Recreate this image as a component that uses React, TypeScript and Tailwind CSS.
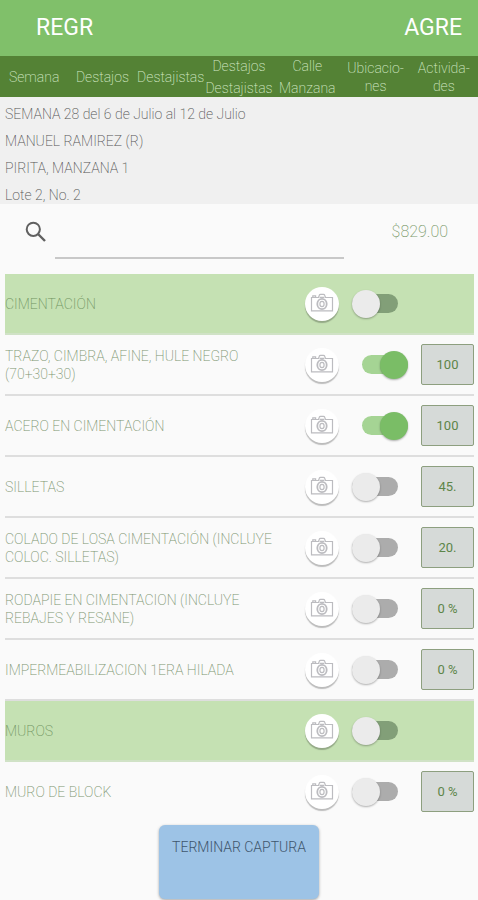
import { useState } from "react";

type Item = {
  name: string;
  group?: boolean;
  on?: boolean;
  value?: string;
};

const items: Item[] = [
  { name: "CIMENTACIÓN", group: true },
  { name: "TRAZO, CIMBRA, AFINE, HULE NEGRO (70+30+30)", on: true, value: "100" },
  { name: "ACERO EN CIMENTACIÓN", on: true, value: "100" },
  { name: "SILLETAS", value: "45." },
  { name: "COLADO DE LOSA CIMENTACIÓN (INCLUYE COLOC. SILLETAS)", value: "20." },
  { name: "RODAPIE EN CIMENTACION (INCLUYE REBAJES Y RESANE)", value: "0 %" },
  { name: "IMPERMEABILIZACION 1ERA HILADA", value: "0 %" },
  { name: "MUROS", group: true },
  { name: "MURO DE BLOCK", value: "0 %" },
];

const tabs: { lines: string[]; split?: boolean }[] = [
  { lines: ["Semana"] },
  { lines: ["Destajos"] },
  { lines: ["Destajistas"] },
  { lines: ["Destajos", "Destajistas"], split: true },
  { lines: ["Calle", "Manzana"], split: true },
  { lines: ["Ubicacio-", "nes"] },
  { lines: ["Activida-", "des"] },
];

function CameraIcon() {
  return (
    <svg viewBox="0 0 24 20" className="h-5 w-6" fill="none" stroke="#bcbcc0" strokeWidth="1.2" aria-hidden="true">
      <path d="M1.5 4.5h7l.8-2.2q.3-.9 1.2-.9h3q.9 0 1.2.9l.8 2.2h7v13.4h-21z" />
      <path d="M2.8 4.3V2.8h2.8v1.5M9.6 4.3h4.8" />
      <ellipse cx="12" cy="11" rx="4.7" ry="5.2" strokeWidth="1.8" />
      <ellipse cx="12" cy="11" rx="2.1" ry="2.6" strokeWidth="1.2" />
    </svg>
  );
}

function Toggle({ label, initial, group }: { label: string; initial: boolean; group: boolean }) {
  const [on, setOn] = useState(initial);
  const track = on ? "bg-[#a5d494]" : group ? "bg-[#829f78]" : "bg-[#acacac]";
  return (
    <label className={`relative flex h-7 w-[46px] cursor-pointer items-center ${on ? "ml-2.5" : ""}`}>
      <input
        type="checkbox"
        role="switch"
        className="peer sr-only"
        aria-label={label}
        checked={on}
        onChange={(e) => setOn(e.target.checked)}
      />
      <span className={`h-[19px] w-full rounded-full ${track}`} />
      <span
        className={`absolute top-0 size-7 rounded-full shadow-[0_1px_2px_rgba(0,0,0,0.3)] ${
          on ? "right-0 bg-[#7abd66]" : "left-0 bg-[#ebebeb]"
        }`}
      />
    </label>
  );
}

function Row({ item }: { item: Item }) {
  return (
    <li
      className={`flex h-[61px] items-center border-b-2 last:border-transparent ${
        item.group ? "border-[#d0e2c6] bg-[#c5e1b3]" : "border-[#dedede]"
      }`}
    >
      <span
        className={`min-w-0 flex-1 pr-2 text-sm leading-[18px] ${item.group ? "text-[#709461]" : "text-[#7c9570]"}`}
      >
        {item.name}
      </span>
      <button
        type="button"
        aria-label={`Foto ${item.name}`}
        className="mr-[13px] flex size-[34px] shrink-0 items-center justify-center rounded-full bg-white pb-0.5 shadow-[0_2px_1px_rgba(0,0,0,0.25)]"
      >
        <CameraIcon />
      </button>
      <div className="flex w-[69px] shrink-0">
        <Toggle label={item.name} initial={!!item.on} group={!!item.group} />
      </div>
      <div className="w-[53px] shrink-0">
        {item.value && (
          <input
            type="text"
            aria-label={`Avance ${item.name}`}
            defaultValue={item.value}
            className="block h-[41px] w-full rounded-xs border border-[#8d9f7f] bg-[#d6dad8] text-center text-[13px] font-normal text-[#5d8549] outline-none"
          />
        )}
      </div>
    </li>
  );
}

export default function App() {
  return (
    <div className="min-h-screen bg-[#fafafa] font-['Roboto','Liberation_Sans',sans-serif] font-extralight">
      <header className="flex h-14 items-center justify-between bg-[#80c06a] pl-9 pr-4 text-[23px] text-white">
        <button type="button" className="font-normal">REGR</button>
        <button type="button" className="font-normal">AGRE</button>
      </header>

      <nav className="grid h-[41px] grid-cols-7 bg-[#548235] text-sm leading-[18px] text-[#d3e8c6]">
        {tabs.map((tab, i) => (
          <button
            key={i}
            type="button"
            className={`flex h-[41px] min-w-0 flex-col items-center justify-center ${tab.split ? "gap-1" : ""}`}
          >
            {tab.lines.map((line) => (
              <span key={line}>{line}</span>
            ))}
          </button>
        ))}
      </nav>

      <section className="flex flex-col gap-[9px] bg-[#f0f0f0] px-[5px] pt-2 text-sm leading-[18px] text-[#555]">
        <p>SEMANA 28 del 6 de Julio al 12 de Julio</p>
        <p>MANUEL RAMIREZ (R)</p>
        <p>PIRITA, MANZANA 1</p>
        <p>Lote 2, No. 2</p>
      </section>

      <div className="flex h-[55px] items-center pl-6 pr-[30px]">
        <label htmlFor="buscar" className="shrink-0">
          <svg viewBox="0 0 24 24" className="size-6" fill="none" stroke="#606060" strokeWidth="2" aria-hidden="true">
            <circle cx="9.3" cy="9.3" r="6.6" />
            <path d="M14 14l7 7" strokeWidth="2.4" />
          </svg>
        </label>
        <input
          id="buscar"
          type="text"
          aria-label="Buscar"
          className="ml-[7px] h-full min-w-0 flex-1 border-b-2 border-[#c8c8c8] bg-transparent outline-none"
        />
        <span className="ml-12 text-base text-[#7c9a6c]">$829.00</span>
      </div>

      <main className="pl-[5px] pr-1 pt-[15px]">
        <ul>
          {items.map((item) => (
            <Row key={item.name} item={item} />
          ))}
        </ul>
      </main>

      <footer className="flex justify-center pt-0.5">
        <button
          type="button"
          className="flex h-[74px] w-40 justify-center rounded-md bg-[#9dc3e6] pt-3 text-sm font-light text-[#3f566d] shadow-[0_1px_3px_rgba(0,0,0,0.35)]"
        >
          TERMINAR CAPTURA
        </button>
      </footer>
    </div>
  );
}
